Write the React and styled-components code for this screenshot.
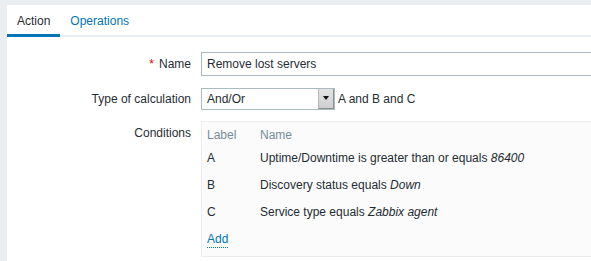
import React from "react";
import styled, { createGlobalStyle } from "styled-components";

const Global = createGlobalStyle`
  html, body {
    margin: 0;
    padding: 0;
    background: #ebeef0;
    overflow: hidden;
  }
  body {
    font-family: "Liberation Sans", Arial, sans-serif;
    font-size: 12px;
    color: #1f2c33;
  }
`;

const Page = styled.div`
  padding: 5px 0 0 7px;
`;

const Panel = styled.div`
  background: #ffffff;
  height: 256px;
  overflow: hidden;
`;

const Tabs = styled.div`
  display: flex;
  height: 30px;
  border-bottom: 2px solid #ebeef0;
`;

const Tab = styled.div`
  padding: 1px 10px 0;
  line-height: 30px;
  font-size: 12px;
  color: ${(p) => (p.active ? "#1f2c33" : "#0275b8")};
  box-shadow: ${(p) => (p.active ? "inset 0 -3px 0 #0275b8" : "none")};
  margin-bottom: -2px;
  height: 32px;
  box-sizing: border-box;
`;

const Form = styled.div`
  padding-top: 15px;
  display: grid;
  grid-template-columns: 184px 500px;
  column-gap: 10px;
  row-gap: 12px;
  align-items: start;
`;

const Label = styled.div`
  text-align: right;
  line-height: ${(p) => p.h || 24}px;
  padding-top: ${(p) => p.top || 0}px;
`;

const Req = styled.span`
  color: #dc0000;
  margin-right: 5px;
`;

const TextInput = styled.div`
  width: 453px;
  height: 22px;
  border: 1px solid #acbbc2;
  line-height: 22px;
  padding: 0 5px;
`;

const SelectRow = styled.div`
  display: flex;
  align-items: center;
  height: 23px;
  margin-top: -1px;
`;

const Select = styled.div`
  display: flex;
  width: 132px;
  height: 20px;
  border: 1px solid #acbbc2;
  background: #fff;
  align-items: stretch;
`;

const SelectText = styled.div`
  flex: 1;
  padding-left: 5px;
  line-height: 20px;
`;

const Arrow = styled.div`
  width: 14px;
  background: linear-gradient(#e4e4e4, #cfcfcf);
  border-left: 1px solid #b6b6b6;
  border-right: 1px solid #8e8e8e;
  border-bottom: 1px solid #8e8e8e;
  display: flex;
  align-items: center;
  justify-content: center;
  &::after {
    content: "";
    border-left: 3px solid transparent;
    border-right: 3px solid transparent;
    border-top: 4px solid #111;
  }
`;

const Formula = styled.span`
  margin-left: 3px;
`;

const CondBox = styled.div`
  width: 460px;
  border: 1px solid #ebeef0;
  background: #fbfbfb;
  padding: 4px 5px 4px;
  margin-top: -1px;
`;

const Table = styled.div`
  display: grid;
  grid-template-columns: 53px 1fr;
  grid-template-rows: 18px;
  grid-auto-rows: 27px;
  align-items: center;
`;

const Head = styled.div`
  color: #768d99;
`;

const Cell = styled.div``;

const AddLink = styled.a`
  color: #0275b8;
  text-decoration: none;
  border-bottom: 1px dotted #0275b8;
  padding-bottom: 1px;
`;

const rows = [
  ["A", "Uptime/Downtime is greater than or equals ", "86400"],
  ["B", "Discovery status equals ", "Down"],
  ["C", "Service type equals ", "Zabbix agent"],
];

export default function App() {
  return (
    <Page>
      <Global />
      <Panel>
        <Tabs>
          <Tab active>Action</Tab>
          <Tab>Operations</Tab>
        </Tabs>
        <Form>
          <Label>
            <Req>*</Req>Name
          </Label>
          <TextInput>Remove lost servers</TextInput>

          <Label h={22}>Type of calculation</Label>
          <SelectRow>
            <Select>
              <SelectText>And/Or</SelectText>
              <Arrow />
            </Select>
            <Formula>A and B and C</Formula>
          </SelectRow>

          <Label h={14} top={4}>Conditions</Label>
          <CondBox>
            <Table>
              <Head>Label</Head>
              <Head>Name</Head>
              {rows.map(([l, t, v]) => (
                <React.Fragment key={l}>
                  <Cell>{l}</Cell>
                  <Cell>
                    {t}
                    <i>{v}</i>
                  </Cell>
                </React.Fragment>
              ))}
              <Cell>
                <AddLink>Add</AddLink>
              </Cell>
            </Table>
          </CondBox>
        </Form>
      </Panel>
    </Page>
  );
}
